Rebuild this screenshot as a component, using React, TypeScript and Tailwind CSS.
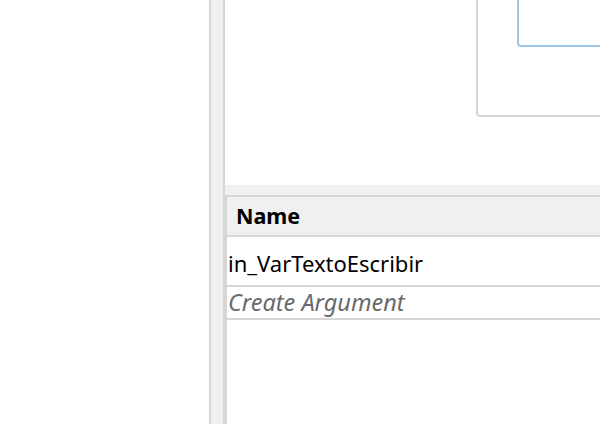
import React from 'react';

const font = { fontFamily: '"Noto Sans", "Open Sans", sans-serif' };

const App: React.FC = () => {
  return (
    <div className="w-[600px] h-[424px] flex bg-white overflow-hidden" style={font}>
      {/* Left panel */}
      <div className="w-[209px] shrink-0 bg-white"></div>

      {/* Splitter */}
      <div className="w-[16px] shrink-0 bg-[#f0f0f0] border-l-2 border-r-2 border-[#d6d6d6]"></div>

      {/* Right panel */}
      <div className="flex-1 flex flex-col min-w-0">
        {/* Designer area */}
        <div className="h-[185px] shrink-0 bg-white overflow-hidden">
          <div className="ml-[251px] -mt-[20px] h-[137px] border-2 border-[#d6d6d6] rounded-[4px] -mr-[20px]">
            <div className="ml-[39px] h-[65px] border-2 border-[#9cc8ea] rounded-[4px] -mr-[20px]"></div>
          </div>
        </div>

        <div className="h-[10px] shrink-0 bg-[#f0f0f0]"></div>

        {/* Arguments table */}
        <div className="flex-1 flex flex-col border-t-2 border-l-2 border-[#d6d6d6]">
          <div className="h-[40px] bg-[#f0f0f0] border-b-2 border-[#d6d6d6] flex items-center pl-[9px]">
            <span className="text-[21.5px] font-bold text-black leading-none">Name</span>
          </div>
          <div className="h-[50px] border-b-2 border-[#d6d6d6] flex items-center pl-[1px] pt-[3px]">
            <span className="text-[22px] text-black leading-none">in_VarTextoEscribir</span>
          </div>
          <div className="h-[33px] border-b-2 border-[#d6d6d6] flex items-center pl-[1px] pt-[1px]">
            <span className="text-[23.5px] italic text-[#6a6a6a] leading-none">Create Argument</span>
          </div>
          <div className="flex-1 bg-white"></div>
        </div>
      </div>
    </div>
  );
};

export default App;
